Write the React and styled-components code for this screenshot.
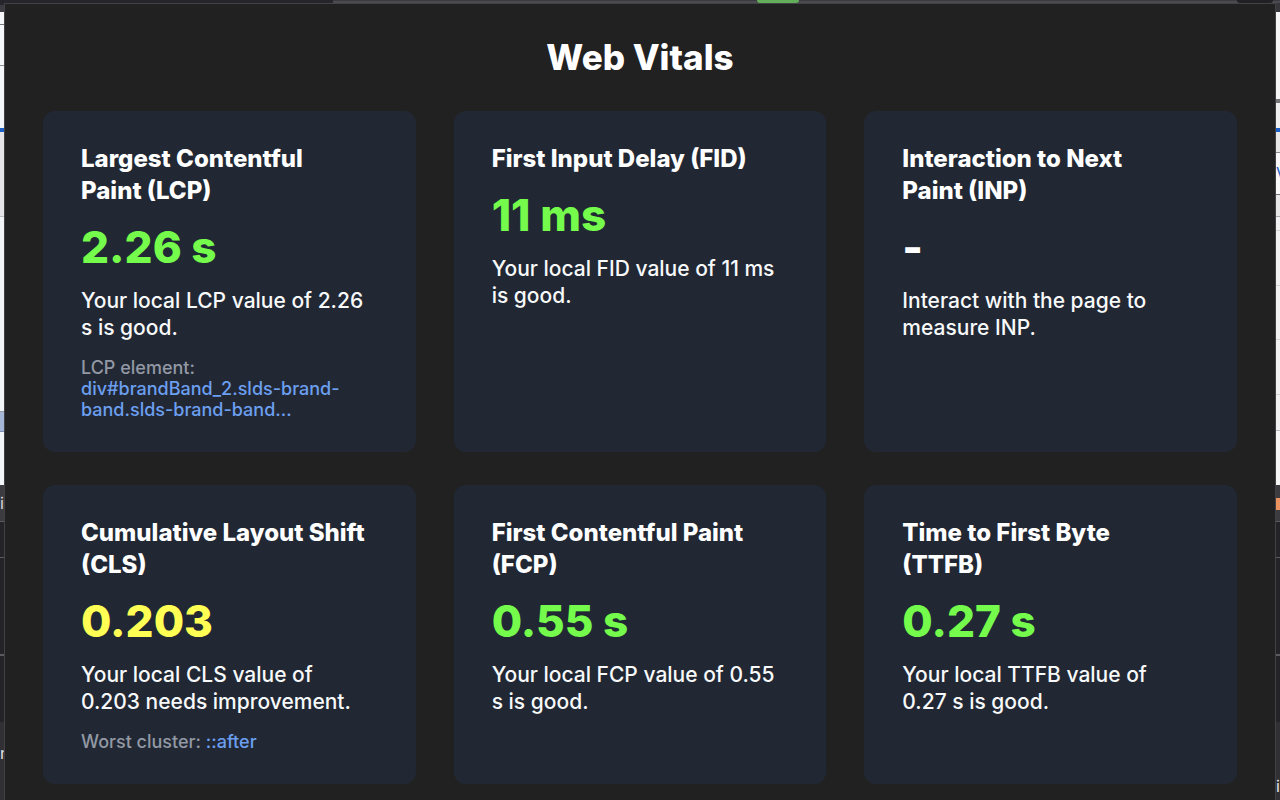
import React from "react";
import styled, { createGlobalStyle } from "styled-components";

const GlobalStyle = createGlobalStyle`
  *, *::before, *::after { box-sizing: border-box; }
  body {
    margin: 0;
    background: #212121;
    color: #ffffff;
    font-family: Inter, "Liberation Sans", sans-serif;
  }
`;

const Screen = styled.div`
  display: grid;
  grid-template: 3px 1fr / 4px 1fr 4px;
  height: 100vh;
  overflow: hidden;
`;

const BrowserBar = styled.div`
  grid-column: 1 / -1;
  display: flex;
  background: #4b4a4f;
  border-top: 1px solid #3b3a40;
`;

const TabStrip = styled.div`
  width: 26%;
  margin-top: -1px;
  background: linear-gradient(115deg, #26252b 0 310px, #3b3a40 311px);
`;

const BarSpace = styled.div`
  flex: ${({ $grow }) => $grow};
`;

const Pill = styled.div`
  width: ${({ $width }) => $width};
  margin-top: -1px;
  border-radius: 0 0 4px 4px;
  background: ${({ $color }) => $color};
`;

const PageEdge = styled.div`
  display: flex;
  flex-direction: column;
  min-height: 0;
  overflow: hidden;
`;

const Band = styled.div`
  flex: 0 0 ${({ $height }) => $height}px;
  background: ${({ $color }) => $color};
  color: ${({ $ink }) => $ink || "inherit"};
  font-size: 16px;
  line-height: ${({ $height }) => $height}px;
  overflow: hidden;
`;

const Panel = styled.main`
  min-height: 0;
  overflow: hidden;
  padding: 32px 38px;
  background: #212121;
  border: 1px solid #424146;
  border-bottom: 0;
`;

const Title = styled.h1`
  margin: 0 0 32px;
  font-size: 35px;
  font-weight: 800;
  line-height: 43px;
  text-align: center;
`;

const Cards = styled.div`
  display: grid;
  grid-template-columns: repeat(3, 1fr);
  gap: 33px 38px;
`;

const Card = styled.section`
  display: flex;
  flex-direction: column;
  gap: 16px;
  padding: 32px 38px;
  border-radius: 12px;
  background: #212834;
`;

const Name = styled.h2`
  margin: 0;
  font-size: 24px;
  font-weight: 800;
  line-height: 32px;
  white-space: nowrap;
`;

const tones = { good: "#75fb4c", warn: "#ffff54", none: "#ffffff" };

const Value = styled.p`
  margin: 0;
  color: ${({ $tone }) => tones[$tone]};
  font-size: 44px;
  font-weight: 800;
  line-height: 48px;
`;

const Description = styled.p`
  margin: 0;
  color: #f8f9fa;
  font-size: 21px;
  font-weight: 500;
  line-height: 27px;
  white-space: nowrap;
`;

const Detail = styled.p`
  margin: 0;
  color: #9399a4;
  font-size: 18px;
  font-weight: 500;
  line-height: 21px;
  white-space: nowrap;
`;

const ElementLink = styled.a`
  color: #6c9ff0;
  text-decoration: none;
`;

const leftEdge = [
  [2, "#26252b"], [7, "#3c3b41"], [12, "#f4f6f8"], [1, "#77787b"], [40, "#f5f7fa"],
  [1, "#8f9093"], [62, "#f4f6f9"], [4, "#1d60c5"], [84, "#e5e5e7"], [1, "#bfbfc1"],
  [194, "#f2f4f7"], [1, "#98999c"], [19, "#a5b6d7"], [1, "#7890b8"], [53, "#f3f6f8"],
  [36, "#3c3b40", "i", "#d5d5d8"], [1, "#5b5a5f"], [35, "#242328"], [1, "#5b5a5f"],
  [96, "#242328"], [2, "#5b5a5f"], [66, "#242328"], [62, "#303035", "n", "#e4e4e7"],
  [16, "#303035"],
];

const rightEdge = [
  [9, "#37363b"], [87, "#f5f5f5"], [4, "#77777a"], [25, "#f0f0f0"], [4, "#1d60c5"],
  [20, "#e7e7e8"], [1, "#8a8a8c"], [41, "#f9f9fa", "V", "#1d60c5"], [1, "#6f6f71"],
  [21, "#e7e7e8"], [1, "#aaaaac"], [13, "#f1f1f1"], [1, "#d4d4d5"], [54, "#f1f1f1"],
  [1, "#d4d4d5"], [53, "#f1f1f1"], [1, "#d4d4d5"], [54, "#f1f1f1"], [1, "#d4d4d5"],
  [35, "#f1f1f1"], [1, "#bcbcbe"], [54, "#f5f5f5"], [13, "#3c3b40"], [12, "#ec9160"],
  [11, "#3c3b40"], [1, "#5b5a5f"], [35, "#242328"], [1, "#5b5a5f"], [96, "#242328"],
  [2, "#5b5a5f"], [66, "#242328"], [50, "#303035"], [28, "#303035", "i", "#e4e4e7"],
];

const Edge = ({ bands }) => (
  <PageEdge aria-hidden="true">
    {bands.map(([height, color, text, ink], i) => (
      <Band key={i} $height={height} $color={color} $ink={ink}>{text}</Band>
    ))}
  </PageEdge>
);

const metrics = [
  {
    name: <>Largest Contentful<br />Paint (LCP)</>,
    value: "2.26 s",
    tone: "good",
    text: <>Your local LCP value of 2.26<br />s is good.</>,
    detail: "LCP element:",
    link: <><br />div#brandBand_2.slds-brand-<br />band.slds-brand-band...</>,
  },
  {
    name: "First Input Delay (FID)",
    value: "11 ms",
    tone: "good",
    text: <>Your local FID value of 11 ms<br />is good.</>,
  },
  {
    name: <>Interaction to Next<br />Paint (INP)</>,
    value: "-",
    tone: "none",
    text: <>Interact with the page to<br />measure INP.</>,
  },
  {
    name: <>Cumulative Layout Shift<br />(CLS)</>,
    value: "0.203",
    tone: "warn",
    text: <>Your local CLS value of<br />0.203 needs improvement.</>,
    detail: "Worst cluster: ",
    link: "::after",
  },
  {
    name: <>First Contentful Paint<br />(FCP)</>,
    value: "0.55 s",
    tone: "good",
    text: <>Your local FCP value of 0.55<br />s is good.</>,
  },
  {
    name: <>Time to First Byte<br />(TTFB)</>,
    value: "0.27 s",
    tone: "good",
    text: <>Your local TTFB value of<br />0.27 s is good.</>,
  },
];

export default function App() {
  return (
    <>
      <GlobalStyle />
      <Screen>
        <BrowserBar>
          <TabStrip />
          <BarSpace $grow={424} />
          <Pill $width="42px" $color="#62ae5a" />
          <BarSpace $grow={438} />
          <Pill $width="36px" $color="#212023" />
          <BarSpace $grow={7} />
        </BrowserBar>
        <Edge bands={leftEdge} />
        <Panel>
          <Title>Web Vitals</Title>
          <Cards>
            {metrics.map((m, i) => (
              <Card key={i}>
                <Name>{m.name}</Name>
                <Value $tone={m.tone}>{m.value}</Value>
                <Description>{m.text}</Description>
                {m.detail && (
                  <Detail>
                    {m.detail}
                    <ElementLink href="#element">{m.link}</ElementLink>
                  </Detail>
                )}
              </Card>
            ))}
          </Cards>
        </Panel>
        <Edge bands={rightEdge} />
      </Screen>
    </>
  );
}
